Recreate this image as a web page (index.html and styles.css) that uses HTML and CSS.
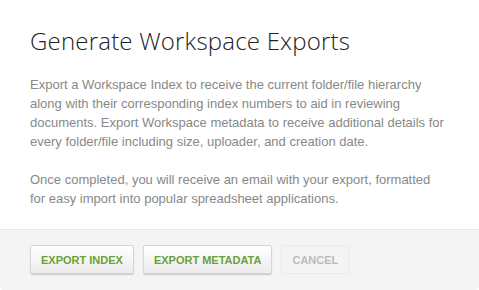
FILE: index.html
```
<!DOCTYPE html>
<html>
<head>
<meta charset="utf-8">
<link rel="stylesheet" href="styles.css">
</head>
<body>
<div class="modal">
  <div class="modal-body">
    <h1 class="title">Generate Workspace Exports</h1>
    <p class="text">Export a Workspace Index to receive the current folder/file hierarchy along with their corresponding index numbers to aid in reviewing documents. Export Workspace metadata to receive additional details for every folder/file including size, uploader, and creation date.</p>
    <p class="text">Once completed, you will receive an email with your export, formatted for easy import into popular spreadsheet applications.</p>
  </div>
  <div class="modal-footer">
    <button class="btn">EXPORT INDEX</button>
    <button class="btn">EXPORT METADATA</button>
    <button class="btn btn-disabled">CANCEL</button>
  </div>
</div>
</body>
</html>
```
FILE: styles.css
```
html, body {
  margin: 0;
  padding: 0;
  background: #ffffff;
}
.modal {
  width: 479px;
  height: 290px;
  background: #ffffff;
  border-radius: 4px;
  overflow: hidden;
  display: flex;
  flex-direction: column;
}
.modal-body {
  padding: 25px 30px 0 30px;
  height: 204px;
  box-sizing: border-box;
  height: 229px;
}
.title {
  margin: 0 0 18px 0;
  font-family: "Open Sans", sans-serif;
  font-weight: 300;
  font-size: 24px;
  line-height: 32px;
  letter-spacing: 0.2px;
  color: #222;
}
.text {
  margin: 0 0 19px 0;
  font-family: "Liberation Sans", Arial, sans-serif;
  font-size: 13px;
  line-height: 19px;
  color: #888;
}
.modal-footer {
  flex: 1;
  background: #f4f4f4;
  border-top: 1px solid #e6e6e6;
  display: flex;
  gap: 9px;
  padding: 15px 30px 0 30px;
  align-items: flex-start;
}
.btn {
  height: 29px;
  padding: 0 10px;
  font-family: "Liberation Sans", Arial, sans-serif;
  font-weight: bold;
  font-size: 11px;
  color: #6aa13a;
  background: linear-gradient(#ffffff, #ececec);
  border: 1px solid #d6d6d6;
  border-radius: 2px;
  box-shadow: 0 1px 1px rgba(0,0,0,0.18);
}
.btn-disabled {
  color: #bbbbbb;
  background: #f4f4f4;
  border-color: #eaeaea;
  box-shadow: none;
}
```
